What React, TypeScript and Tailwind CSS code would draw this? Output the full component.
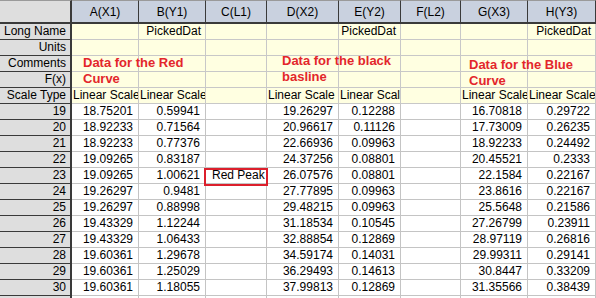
import React from "react";

const cols = [
  { name: "A(X1)", w: 67 },
  { name: "B(Y1)", w: 67 },
  { name: "C(L1)", w: 61 },
  { name: "D(X2)", w: 72 },
  { name: "E(Y2)", w: 62 },
  { name: "F(L2)", w: 60 },
  { name: "G(X3)", w: 67 },
  { name: "H(Y3)", w: 68 },
];

const A = ["18.75201", "18.92233", "18.92233", "19.09265", "19.09265", "19.26297", "19.26297", "19.43329", "19.43329", "19.60361", "19.60361", "19.60361"];
const B = ["0.59941", "0.71564", "0.77376", "0.83187", "1.00621", "0.9481", "0.88998", "1.12244", "1.06433", "1.29678", "1.25029", "1.18055"];
const D = ["19.26297", "20.96617", "22.66936", "24.37256", "26.07576", "27.77895", "29.48215", "31.18534", "32.88854", "34.59174", "36.29493", "37.99813"];
const E = ["0.12288", "0.11126", "0.09963", "0.08801", "0.08801", "0.09963", "0.09963", "0.10545", "0.12869", "0.14031", "0.14613", "0.12869"];
const G = ["16.70818", "17.73009", "18.92233", "20.45521", "22.1584", "23.8616", "25.5648", "27.26799", "28.97119", "29.99311", "30.8447", "31.35566"];
const H = ["0.29722", "0.26235", "0.24492", "0.2333", "0.22167", "0.22167", "0.21586", "0.23911", "0.26816", "0.29141", "0.33209", "0.38439"];

function RowHead({ children }: { children?: React.ReactNode }) {
  return (
    <div className="h-[16px] bg-[#dedede] border-r-2 border-b border-r-[#3a3a3a] border-b-[#3a3a3a] text-right pr-[4px] text-[12px] leading-[15px] text-black whitespace-nowrap overflow-hidden">
      {children}
    </div>
  );
}

function MetaCell({ children, align = "right" }: { children?: React.ReactNode; align?: "left" | "right" }) {
  return (
    <div
      className={
        "h-[16px] bg-[#ffffe1] border-r border-b border-[#c8c8c8] text-[12px] leading-[15px] text-black whitespace-nowrap overflow-hidden " +
        (align === "left" ? "text-left pl-[1px]" : "text-right pr-[4px]")
      }
    >
      {children}
    </div>
  );
}

function DataCell({ children }: { children?: React.ReactNode }) {
  return (
    <div className="h-[16px] bg-white border-r border-b border-[#c4c4c4] text-right pr-[5px] text-[12px] leading-[15px] text-black whitespace-nowrap overflow-hidden">
      {children}
    </div>
  );
}

export default function App() {
  const metaRows = ["Long Name", "Units", "Comments", "F(x)", "Scale Type"];
  return (
    <div
      className="relative w-[596px] h-[298px] overflow-hidden bg-white"
      style={{ fontFamily: '"Liberation Sans", Arial, sans-serif' }}
    >
      <div className="grid grid-cols-[72px_67px_67px_61px_72px_62px_60px_67px_68px]">
        {/* header */}
        <div className="h-[24px] bg-[#dedede] border-r-2 border-b-2 border-[#3a3a3a] border-t border-t-[#9a9a9a]" />
        {cols.map((c) => (
          <div
            key={c.name}
            className="h-[24px] bg-[#c9d1df] border-r border-b-2 border-[#3a3a3a] border-t border-t-[#9a9a9a] flex items-center justify-center text-[12px] text-black"
          >
            {c.name}
          </div>
        ))}

        {/* meta rows */}
        {metaRows.map((label) => (
          <React.Fragment key={label}>
            <RowHead>{label}</RowHead>
            {cols.map((c, ci) => {
              if (label === "Long Name" && (ci === 1 || ci === 4 || ci === 7)) {
                return <MetaCell key={ci}>PickedDat</MetaCell>;
              }
              if (label === "Scale Type" && ci !== 2 && ci !== 5) {
                return (
                  <MetaCell key={ci} align="left">
                    Linear Scale
                  </MetaCell>
                );
              }
              return <MetaCell key={ci} />;
            })}
          </React.Fragment>
        ))}

        {/* data rows */}
        {A.map((_, i) => (
          <React.Fragment key={i}>
            <RowHead>{19 + i}</RowHead>
            <DataCell>{A[i]}</DataCell>
            <DataCell>{B[i]}</DataCell>
            {i === 4 ? (
              <div className="relative h-[16px] bg-white border-r border-b border-[#c4c4c4] text-left pl-[6px] text-[12px] leading-[15px] text-black whitespace-nowrap">
                Red Peak
                <div className="absolute left-[-2px] right-[-2px] top-0 bottom-[-3px] border-2 border-[#dc1f2c]" />
              </div>
            ) : (
              <DataCell />
            )}
            <DataCell>{D[i]}</DataCell>
            <DataCell>{E[i]}</DataCell>
            <DataCell />
            <DataCell>{G[i]}</DataCell>
            <DataCell>{H[i]}</DataCell>
          </React.Fragment>
        ))}
        <RowHead />
        {cols.map((c) => (
          <DataCell key={c.name} />
        ))}
      </div>

      {/* comment overlays */}
      <div className="absolute left-[83px] top-[55px] text-[13px] leading-[16px] font-bold text-[#e3262b] whitespace-nowrap">
        <div>Data for the Red</div>
        <div>Curve</div>
      </div>
      <div className="absolute left-[282px] top-[53px] text-[13px] leading-[16px] font-bold text-[#e3262b] whitespace-nowrap">
        <div>Data for the black</div>
        <div>basline</div>
      </div>
      <div className="absolute left-[469px] top-[57px] text-[13px] leading-[16px] font-bold text-[#e3262b] whitespace-nowrap">
        <div>Data for the Blue</div>
        <div>Curve</div>
      </div>
    </div>
  );
}
